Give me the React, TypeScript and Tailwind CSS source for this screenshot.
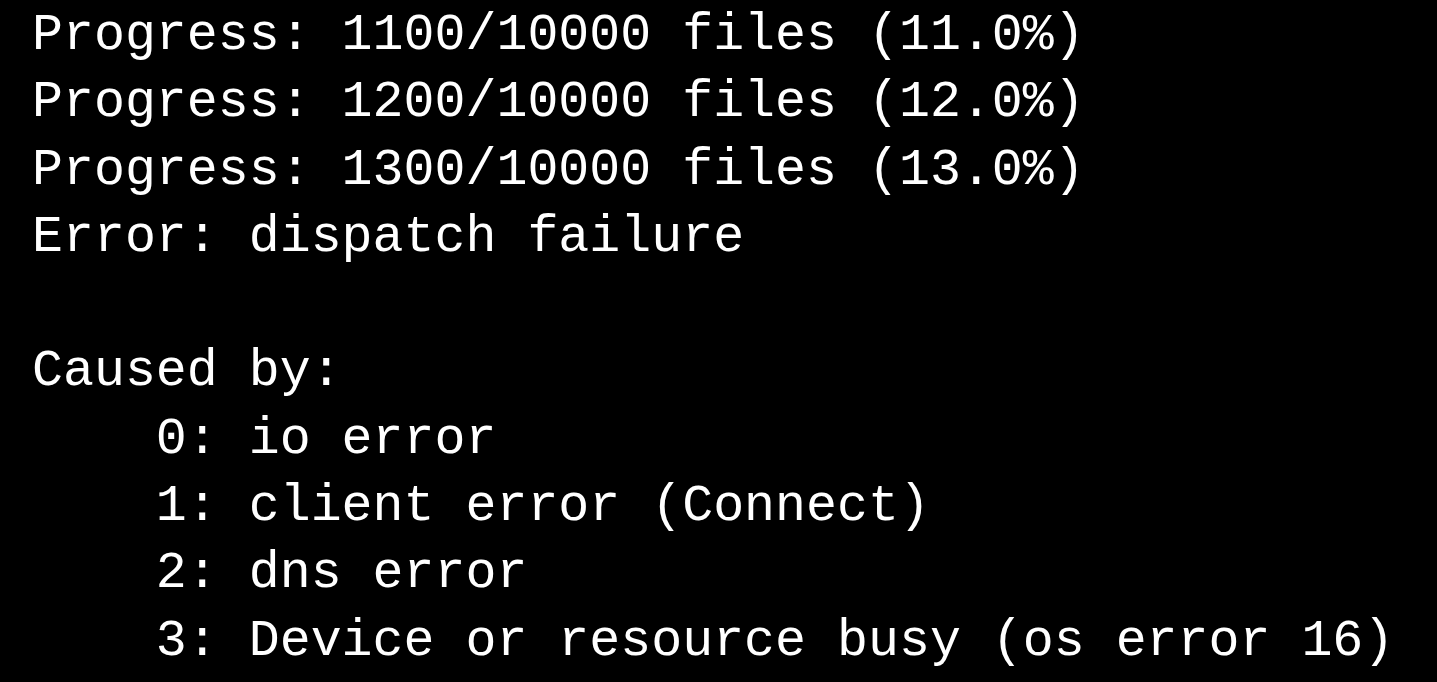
import React from 'react';

const lines = [
  'Progress: 1100/10000 files (11.0%)',
  'Progress: 1200/10000 files (12.0%)',
  'Progress: 1300/10000 files (13.0%)',
  'Error: dispatch failure',
  '',
  'Caused by:',
  '    0: io error',
  '    1: client error (Connect)',
  '    2: dns error',
  '    3: Device or resource busy (os error 16)',
];

export default function App() {
  return (
    <div className="w-[1437px] h-[682px] overflow-hidden bg-black pl-[32px] pt-[2px]">
      <pre className="font-['Liberation_Mono',monospace] text-[51.6px] leading-[67.3px] text-white whitespace-pre">
        {lines.map((line, i) => (
          <div key={i} className="h-[67.3px]">
            {line}
          </div>
        ))}
      </pre>
    </div>
  );
}
